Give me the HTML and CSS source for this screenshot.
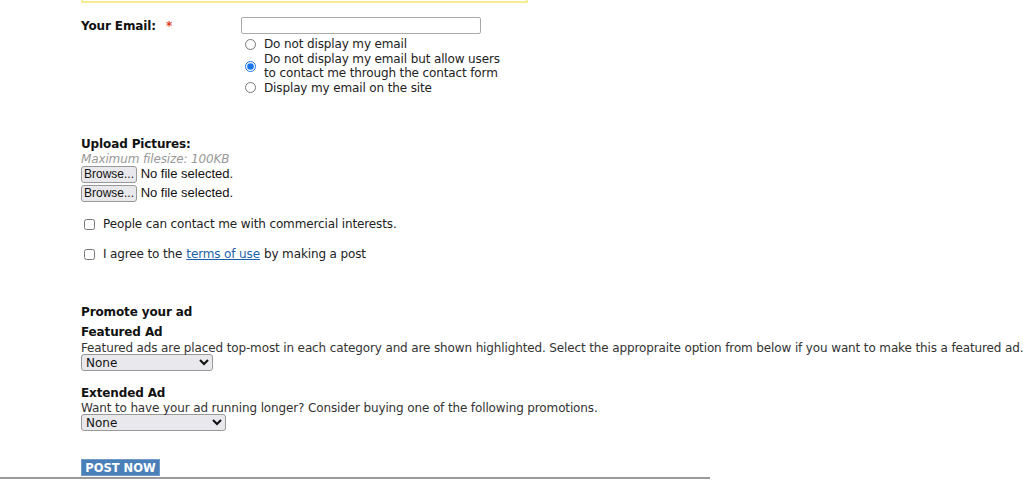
FILE: index.html
```html
<!DOCTYPE html>
<html>
<head>
<meta charset="utf-8">
<title>Post an ad</title>
<link rel="stylesheet" href="styles.css">
</head>
<body>
<div class="page">
	<div class="notice"></div>

	<div class="row email-row">
		<label class="lbl">Your Email: <span class="req">*</span></label>
		<div class="field">
			<input type="text" class="txt">
			<ul class="radios">
				<li><input type="radio" name="showemail"><span>Do not display my email</span></li>
				<li><input type="radio" name="showemail" checked><span>Do not display my email but allow users<br>to contact me through the contact form</span></li>
				<li><input type="radio" name="showemail"><span>Display my email on the site</span></li>
			</ul>
		</div>
	</div>

	<div class="upload">
		<h4>Upload Pictures:</h4>
		<p class="hint">Maximum filesize: 100KB</p>
		<div class="file"><button type="button">Browse...</button> No file selected.</div>
		<div class="file"><button type="button">Browse...</button> No file selected.</div>
	</div>

	<div class="check"><input type="checkbox"> People can contact me with commercial interests.</div>
	<div class="check"><input type="checkbox"> I agree to the <a href="#">terms of use</a> by making a post</div>

	<div class="promote">
		<h4>Promote your ad</h4>
		<div class="opt">
			<h4>Featured Ad</h4>
			<p>Featured ads are placed top-most in each category and are shown highlighted. Select the appropraite option from below if you want to make this a featured ad.</p>
			<select class="sel-feat"><option>None</option></select>
		</div>
		<div class="opt">
			<h4>Extended Ad</h4>
			<p>Want to have your ad running longer? Consider buying one of the following promotions.</p>
			<select class="sel-ext"><option>None</option></select>
		</div>
	</div>

	<button type="button" class="post">POST NOW</button>
</div>
<div class="foot-line"></div>
</body>
</html>
```

FILE: styles.css
```css
*{margin:0;padding:0;}
body{font-family:"DejaVu Sans",Verdana,sans-serif;font-size:12px;letter-spacing:-0.13px;color:#222;background:#fff;}
.page{padding-left:81px;}
.notice{width:443px;height:1px;border:2px solid #f5ec94;border-top:none;}

.row{display:flex;}
.email-row{margin-top:14px;}
.lbl{width:160px;font-weight:bold;color:#111;padding-top:2px;}
.req{color:#e03c1e;margin-left:6px;}
.txt{box-sizing:border-box;width:240px;height:17px;border:1px solid #aaa;border-radius:2px;display:block;font:inherit;}
.radios{list-style:none;margin-top:3px;}
.radios li{display:flex;align-items:center;line-height:14.5px;}
.radios input{width:11px;height:11px;margin:0 8px 0 4px;accent-color:#1a73e8;}

.upload{margin-top:42px;}
h4{font-size:12px;font-weight:bold;color:#111;line-height:15px;}
.hint{color:#999;font-style:italic;line-height:15px;height:12px;}
.file{line-height:19px;font-family:"Liberation Sans",Arial,sans-serif;font-size:13px;letter-spacing:0;color:#111;}
.file button{font:12px "Liberation Sans",Arial,sans-serif;padding:0 2px;height:17px;border:1px solid #999;border-radius:3px;background:#e9e9ed;color:#111;}

.check{margin-top:13px;line-height:19px;display:flex;align-items:center;}
.check + .check{margin-top:11px;}
.check input{width:11px;height:11px;margin:0 8px 0 3px;}
.check a{color:#1a5fa8;margin:0 4px;}

.promote{margin-top:41px;}
.promote > h4{margin-bottom:5px;}
.opt p{line-height:14px;color:#333;margin-top:1px;}
.opt + .opt p{margin-top:0;}
.opt select{display:block;margin-top:-1px;height:17px;font:12px "DejaVu Sans",sans-serif;color:#111;border:1px solid #999;border-radius:3px;background:#e9e9ed;}
.sel-feat{width:132px;}
.sel-ext{width:145px;}
.opt + .opt{margin-top:15px;}

.post{display:block;margin-top:28px;height:17px;width:79px;padding:0;background:#4a7fb8;border:1px solid #6f9acb;color:#fff;font:bold 11.5px "DejaVu Sans",sans-serif;letter-spacing:0;}
.foot-line{margin-top:1px;width:710px;height:2px;background:#9a9a9a;}
```
